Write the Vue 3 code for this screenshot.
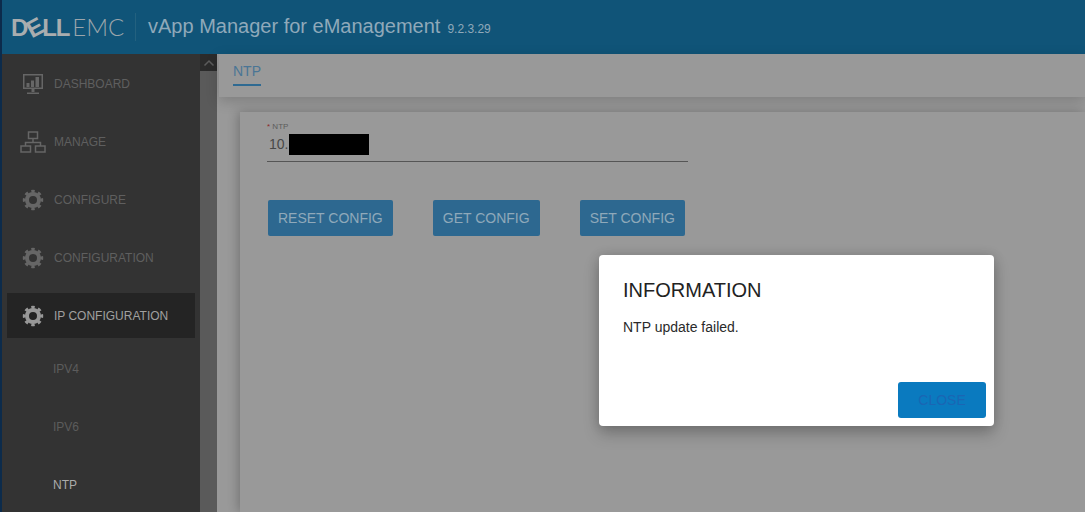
<script setup>
const topItems = [
  { label: 'DASHBOARD', icon: 'monitor' },
  { label: 'MANAGE', icon: 'tree' },
  { label: 'CONFIGURE', icon: 'gear' },
  { label: 'CONFIGURATION', icon: 'gear' },
  { label: 'IP CONFIGURATION', icon: 'gear', active: true },
]
const subItems = [
  { label: 'IPV4' },
  { label: 'IPV6' },
  { label: 'NTP', active: true },
]
const actions = ['RESET CONFIG', 'GET CONFIG', 'SET CONFIG']
</script>

<template>
  <div class="page">
    <header class="header">
      <div class="logo">
        <span class="dell">D<span class="tilt">E</span>LL</span><span class="emc">EMC</span>
      </div>
      <div class="divider"></div>
      <div class="title">vApp Manager for eManagement</div>
      <div class="version">9.2.3.29</div>
    </header>

    <div class="body">
      <aside class="sidebar">
        <nav class="nav">
          <a
            v-for="item in topItems"
            :key="item.label"
            class="nav-item"
            :class="{ active: item.active }"
          >
            <span class="icon">
              <svg v-if="item.icon === 'monitor'" width="22" height="22" viewBox="0 0 22 22">
                <path fill="currentColor" fill-rule="evenodd" d="M1 1h20v15H1zM2.500 2.500v12h17v-12z" />
                <path fill="currentColor" d="M4.500 10h3v4h-3zM9 7.500h3V14H9zM13.500 4h3.500v10h-3.500zM9.500 16h3v3h-3zM5 19.500h12V21H5z" />
              </svg>
              <svg v-else-if="item.icon === 'tree'" width="26" height="22" viewBox="0 0 26 22" fill="none" stroke="currentColor" stroke-width="1.500">
                <rect x="8.500" y="1" width="9" height="6.500" />
                <rect x="1" y="15" width="9.500" height="6" />
                <rect x="15.500" y="15" width="9.500" height="6" />
                <path d="M13 7.500V11.500M5.500 15v-3.500h15V15" />
              </svg>
              <svg v-else width="22" height="22" viewBox="0 0 22 22" fill="none" stroke="currentColor">
                <circle cx="11" cy="11" r="6" stroke-width="4" />
                <circle cx="11" cy="11" r="8.700" stroke-width="3" pathLength="80" stroke-dasharray="5 5" stroke-dashoffset="2.500" />
              </svg>
            </span>
            <span class="nav-label">{{ item.label }}</span>
          </a>
          <a
            v-for="item in subItems"
            :key="item.label"
            class="sub-item"
            :class="{ active: item.active }"
          >{{ item.label }}</a>
        </nav>
        <div class="scrollbar">
          <div class="scroll-up">
            <svg width="12" height="8" viewBox="0 0 12 8" fill="none" stroke="#5c5c5c" stroke-width="1.500">
              <path d="M1.500 6.500 6 2l4.500 4.500" />
            </svg>
          </div>
        </div>
      </aside>

      <main class="main">
        <div class="tabs">
          <span class="tab">NTP</span>
        </div>
        <section class="card">
          <div class="field">
            <div class="field-label"><span class="req">*</span> NTP</div>
            <div class="field-value">10.<span class="redact"></span></div>
          </div>
          <div class="actions">
            <button v-for="a in actions" :key="a" class="btn">{{ a }}</button>
          </div>
        </section>
      </main>
    </div>

    <div class="modal">
      <h2 class="modal-title">INFORMATION</h2>
      <p class="modal-text">NTP update failed.</p>
      <div class="modal-foot">
        <button class="close">CLOSE</button>
      </div>
    </div>
  </div>
</template>

<style>
html, body { margin: 0; overflow: hidden; background: #999; }
</style>

<style scoped>
.page {
  position: relative;
  width: 1085px;
  height: 512px;
  overflow: hidden;
  display: flex;
  flex-direction: column;
  font-family: "Liberation Sans", Arial, sans-serif;
  background: #999;
  border-left: 2px solid #0c2b4b;
  box-sizing: border-box;
}
.header {
  height: 54px;
  flex: none;
  background: #105478;
  display: flex;
  align-items: center;
  padding-left: 9px;
}
.logo {
  display: flex;
  align-items: baseline;
  color: #a9adaf;
  font-size: 24px;
  line-height: 26px;
  white-space: nowrap;
  width: 113px;
}
.dell { font-weight: 700; letter-spacing: -1.100px; margin-right: 3px; }
.tilt { display: inline-block; transform: rotate(-28deg); }
.emc { font-family: Lato, "Liberation Sans", sans-serif; font-weight: 300; color: #9ba5ab; }
.divider {
  width: 1px;
  height: 28px;
  background: #23617f;
  margin: 0 12px 0 11px;
}
.title {
  color: #8fa9ba;
  font-size: 20px;
  white-space: nowrap;
  margin-top: -1px;
}
.version {
  color: #8fa9ba;
  font-size: 12px;
  margin: 3px 0 0 7px;
}
.body { flex: 1; display: flex; min-height: 0; }
.sidebar { width: 215px; flex: none; display: flex; background: #333; }
.nav {
  width: 198px;
  flex: none;
  padding: 7px 0 0 5px;
  box-sizing: border-box;
  display: flex;
  flex-direction: column;
  gap: 13px;
}
.nav-item {
  width: 188px;
  height: 45px;
  flex: none;
  box-sizing: border-box;
  padding-top: 1px;
  display: flex;
  align-items: center;
  color: #5f5f5f;
  font-size: 12px;
}
.icon {
  width: 52px;
  display: flex;
  justify-content: center;
  flex: none;
  color: #666;
  margin-right: -5px;
}
.nav-label { white-space: nowrap; }
.nav-item.active { background: #242424; color: #a0a0a0; }
.nav-item.active .icon { color: #989898; }
.sub-item {
  height: 45px;
  flex: none;
  display: flex;
  align-items: center;
  padding-left: 46px;
  font-size: 12px;
  color: #5c5c5c;
}
.nav-item + .sub-item { margin-top: -5px; }
.sub-item.active { color: #ababab; }
.scrollbar { width: 17px; flex: none; background: #5a5a5a; }
.scroll-up {
  height: 17px;
  background: #2b2b2b;
  display: flex;
  align-items: center;
  justify-content: center;
}
.main { flex: 1; min-width: 0; padding-left: 2px; display: flex; flex-direction: column; }
.tabs {
  height: 43px;
  flex: none;
  padding-left: 14px;
  box-sizing: border-box;
  background: #999;
  box-shadow: 0 4px 14px rgba(0, 0, 0, 0.18);
  position: relative;
}
.tab {
  display: inline-block;
  margin-top: 8px;
  height: 22px;
  line-height: 18px;
  border-bottom: 2px solid #2f6a92;
  color: #4a7595;
  font-size: 14px;
}
.card {
  margin: 15px 0 0 21px;
  flex: 1;
  background: #999;
  box-shadow: -2px 0 10px rgba(0, 0, 0, 0.24);
  padding: 9px 0 0 27px;
  position: relative;
}
.field { width: 421px; border-bottom: 1px solid #555; height: 40px; box-sizing: content-box; }
.field-label { font-size: 8px; line-height: 12px; color: #5c5c5c; }
.req { color: #8c2a2a; }
.field-value {
  padding-left: 2px;
  font-size: 14px;
  line-height: 21px;
  height: 21px;
  color: #484848;
  display: flex;
  margin-top: 1px;
}
.redact { display: block; width: 80px; height: 21px; background: #000; margin-left: 1px; }
.actions { display: flex; gap: 40px; margin: 38px 0 0 1px; }
.btn {
  height: 36px;
  padding: 0 10px;
  border: 0;
  border-radius: 2px;
  background: #2d6890;
  color: #8fa9ba;
  font: 14px "Liberation Sans", Arial, sans-serif;
}
.modal {
  position: absolute;
  left: 597px;
  top: 255px;
  width: 395px;
  height: 171px;
  box-sizing: border-box;
  background: #fff;
  border-radius: 4px;
  padding: 24px 8px 8px 24px;
  box-shadow: 0 8px 16px rgba(0, 0, 0, 0.22), 0 0 12px rgba(0, 0, 0, 0.14);
  display: flex;
  flex-direction: column;
}
.modal-title {
  margin: 0;
  font-size: 20px;
  font-weight: 400;
  line-height: 23px;
  color: #222;
}
.modal-text {
  margin: 17px 0 0;
  font-size: 14px;
  line-height: 16px;
  color: #2a2a2a;
}
.modal-foot { margin-top: auto; display: flex; justify-content: flex-end; }
.close {
  width: 88px;
  height: 36px;
  border: 0;
  border-radius: 3px;
  background: #0a7abf;
  color: #1a66b4;
  font: 14px "Liberation Sans", Arial, sans-serif;
}
</style>
